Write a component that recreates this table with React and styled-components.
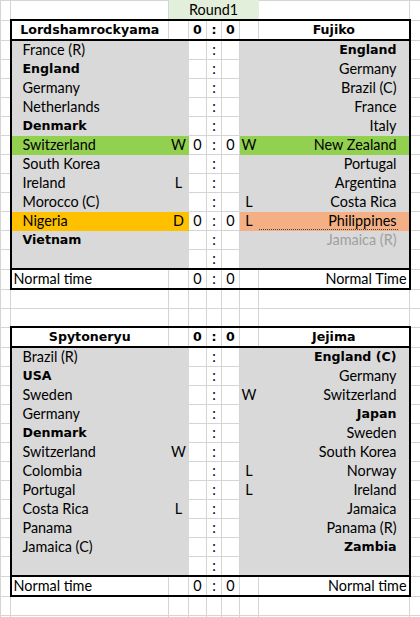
import React from "react";
import styled, { createGlobalStyle, css } from "styled-components";

const GRID = "#d4d4d4";
const GRAY = "#d9d9d9";
const THICK = "2px solid #000";

const GlobalStyle = createGlobalStyle`
  body {
    margin: 0;
    background: #fff;
  }
`;

const Sheet = styled.table`
  border-collapse: collapse;
  table-layout: fixed;
  width: 420px;
  font-family: Lato, "Liberation Sans", sans-serif;
  font-size: 14.4px;
  color: #000;
`;

const Row = styled.tr`
  height: 19px;
`;

const Cell = styled.td`
  padding: 0;
  border: 1px solid ${GRID};
  line-height: 18px;
  white-space: nowrap;
  overflow: hidden;
  text-align: center;
`;

// bold cells in the sheet render much wider than the regular face
const heavy = css`
  font-family: "DejaVu Sans", Verdana, sans-serif;
  font-size: 12.6px;
  font-weight: 700;
`;

const Gutter = styled(Cell)``;

const RoundCell = styled(Cell)`
  background: #e2efda;
  border-color: #e2efda;
`;

const sides = css`
  ${(p) => p.$side === "left" && `border-left: ${THICK};`}
  ${(p) => p.$side === "right" && `border-right: ${THICK};`}
`;

const TeamHead = styled(Cell)`
  ${heavy}
  border-top: ${THICK};
  border-bottom: ${THICK};
  ${sides}
`;

const HeadScore = styled(Cell)`
  ${heavy}
  border-top: ${THICK};
  border-bottom: ${THICK};
`;

const NameCell = styled(Cell)`
  background: ${(p) => p.$fill};
  border-color: ${(p) => p.$fill};
  text-align: ${(p) => (p.$side === "left" ? "left" : "right")};
  padding: ${(p) => (p.$side === "left" ? "0 0 0 11px" : "0 12px 0 0")};
  color: ${(p) => (p.$muted ? "#a0a0a0" : "#000")};
  ${(p) => p.$bold && heavy}
  ${sides}
  ${(p) =>
    p.$dotted &&
    css`
      background-image: repeating-linear-gradient(
        to right,
        #404040 0 1px,
        transparent 1px 2px
      );
      background-size: calc(100% - 10px) 1px;
      background-position: left bottom;
      background-repeat: no-repeat;
    `}
`;

const MarkCell = styled(Cell)`
  background: ${(p) => p.$fill};
  border-color: ${(p) => p.$fill};
`;

const ScoreCell = styled(Cell)``;

const FootName = styled(Cell)`
  border-top: ${THICK};
  border-bottom: ${THICK};
  text-align: ${(p) => (p.$side === "left" ? "left" : "right")};
  padding: ${(p) => (p.$side === "left" ? "0 0 0 2px" : "0 2px 0 0")};
  ${sides}
`;

const FootCell = styled(Cell)`
  border-top: ${THICK};
  border-bottom: ${THICK};
`;

const COLS = [10, 158, 20, 18, 15, 18, 19, 151, 11];

const matches = [
  {
    home: "Lordshamrockyama",
    away: "Fujiko",
    foot: ["Normal time", "Normal Time"],
    rows: [
      { l: "France (R)", r: "England", rb: true },
      { l: "England", lb: true, r: "Germany" },
      { l: "Germany", r: "Brazil (C)" },
      { l: "Netherlands", r: "France" },
      { l: "Denmark", lb: true, r: "Italy" },
      { l: "Switzerland", lm: "W", ls: "0", rs: "0", rm: "W", r: "New Zealand", lf: "#92d050", rf: "#92d050" },
      { l: "South Korea", r: "Portugal" },
      { l: "Ireland", lm: "L", r: "Argentina" },
      { l: "Morocco (C)", rm: "L", r: "Costa Rica" },
      { l: "Nigeria", lm: "D", ls: "0", rs: "0", rm: "L", r: "Philippines", lf: "#ffc000", rf: "#f4b084", dotted: true },
      { l: "Vietnam", lb: true, r: "Jamaica (R)", muted: true },
      {},
    ],
  },
  {
    home: "Spytoneryu",
    away: "Jejima",
    foot: ["Normal time", "Normal time"],
    rows: [
      { l: "Brazil (R)", r: "England (C)", rb: true },
      { l: "USA", lb: true, r: "Germany" },
      { l: "Sweden", rm: "W", r: "Switzerland" },
      { l: "Germany", r: "Japan", rb: true },
      { l: "Denmark", lb: true, r: "Sweden" },
      { l: "Switzerland", lm: "W", r: "South Korea" },
      { l: "Colombia", rm: "L", r: "Norway" },
      { l: "Portugal", rm: "L", r: "Ireland" },
      { l: "Costa Rica", lm: "L", r: "Jamaica" },
      { l: "Panama", r: "Panama (R)" },
      { l: "Jamaica (C)", r: "Zambia", rb: true },
      {},
    ],
  },
];

function BlankRow() {
  return (
    <Row>
      {COLS.map((w, i) => (
        <Gutter key={i} />
      ))}
    </Row>
  );
}

function Match({ match }) {
  return (
    <>
      <Row>
        <Gutter />
        <TeamHead $side="left">{match.home}</TeamHead>
        <HeadScore />
        <HeadScore>0</HeadScore>
        <HeadScore>:</HeadScore>
        <HeadScore>0</HeadScore>
        <HeadScore />
        <TeamHead $side="right">{match.away}</TeamHead>
        <Gutter />
      </Row>
      {match.rows.map((row, i) => (
        <Row key={i}>
          <Gutter />
          <NameCell $side="left" $fill={row.lf || GRAY} $bold={row.lb}>
            {row.l}
          </NameCell>
          <MarkCell $fill={row.lf || GRAY}>{row.lm}</MarkCell>
          <ScoreCell>{row.ls}</ScoreCell>
          <ScoreCell>:</ScoreCell>
          <ScoreCell>{row.rs}</ScoreCell>
          <MarkCell $fill={row.rf || GRAY}>{row.rm}</MarkCell>
          <NameCell
            $side="right"
            $fill={row.rf || GRAY}
            $bold={row.rb}
            $muted={row.muted}
            $dotted={row.dotted}
          >
            {row.r}
          </NameCell>
          <Gutter />
        </Row>
      ))}
      <Row>
        <Gutter />
        <FootName $side="left">{match.foot[0]}</FootName>
        <FootCell />
        <FootCell>0</FootCell>
        <FootCell>:</FootCell>
        <FootCell>0</FootCell>
        <FootCell />
        <FootName $side="right">{match.foot[1]}</FootName>
        <Gutter />
      </Row>
    </>
  );
}

export default function App() {
  return (
    <>
      <GlobalStyle />
      <Sheet>
        <colgroup>
          {COLS.map((w, i) => (
            <col key={i} style={{ width: w }} />
          ))}
        </colgroup>
        <tbody>
          <Row>
            <Gutter />
            <Gutter />
            <RoundCell colSpan={5}>Round1</RoundCell>
            <Gutter />
            <Gutter />
          </Row>
          <Match match={matches[0]} />
          <BlankRow />
          <BlankRow />
          <Match match={matches[1]} />
          <BlankRow />
          <BlankRow />
        </tbody>
      </Sheet>
    </>
  );
}
